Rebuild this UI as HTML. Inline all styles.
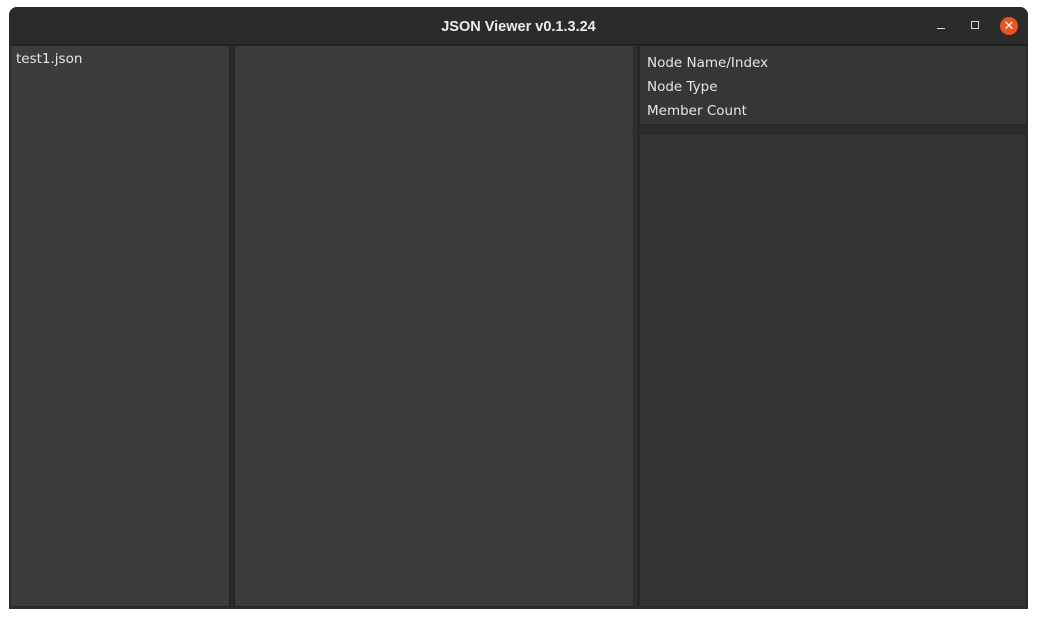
<!DOCTYPE html>
<html><head><meta charset="utf-8"><style>
html,body{margin:0;padding:0;width:1037px;height:618px;background:#fff;overflow:hidden;font-family:"Liberation Sans","DejaVu Sans",sans-serif}
.win{position:absolute;left:9px;top:7px;width:1019px;height:602px;background:#2f2f2f;border-radius:8px 8px 0 0;overflow:hidden}
.tb{position:absolute;left:0;top:0;width:100%;height:37px;background:#2b2b2b;border-bottom:1px solid #1e1e1e}
.title{position:absolute;left:0;right:0;top:12px;text-align:center;color:#ececec;font-weight:bold;font-size:14.5px}
.p{position:absolute;box-sizing:border-box;border:1px solid #262626}
.t{position:absolute;color:#e6e6e6;font-size:13.5px;font-family:"DejaVu Sans",sans-serif}
</style></head><body>
<div class="win">
 <div class="tb">
  <div class="title">JSON Viewer v0.1.3.24</div>
  <div style="position:absolute;left:928px;top:21px;width:8px;height:1px;background:#ddd"></div>
  <div style="position:absolute;left:962px;top:14px;width:6px;height:6px;border:1px solid #ddd"></div>
  <div style="position:absolute;left:991px;top:10px;width:18px;height:18px;border-radius:50%;background:#e95420;color:#fff;font-size:13px;line-height:18px;text-align:center">✕</div>
 </div>
 <div class="p" style="left:1px;top:38px;width:220px;height:562px;background:#3c3c3c"></div>
 <div style="position:absolute;left:221px;top:38px;width:4px;height:562px;background:#2a2a2a"></div>
 <div class="p" style="left:225px;top:38px;width:400px;height:562px;background:#3c3c3c"></div>
 <div style="position:absolute;left:628px;top:38px;width:2px;height:562px;background:#262626"></div>
 <div class="p" style="left:630px;top:38px;width:388px;height:80px;background:#363636"></div>
 <div style="position:absolute;left:630px;top:118px;width:388px;height:8px;background:#2c2c2c"></div>
 <div class="p" style="left:630px;top:126px;width:388px;height:474px;background:#333"></div>
 <div class="t" style="left:7px;top:44px">test1.json</div>
 <div class="t" style="left:638px;top:48px">Node Name/Index</div>
 <div class="t" style="left:638px;top:72px">Node Type</div>
 <div class="t" style="left:638px;top:96px">Member Count</div>
</div>
</body></html>
